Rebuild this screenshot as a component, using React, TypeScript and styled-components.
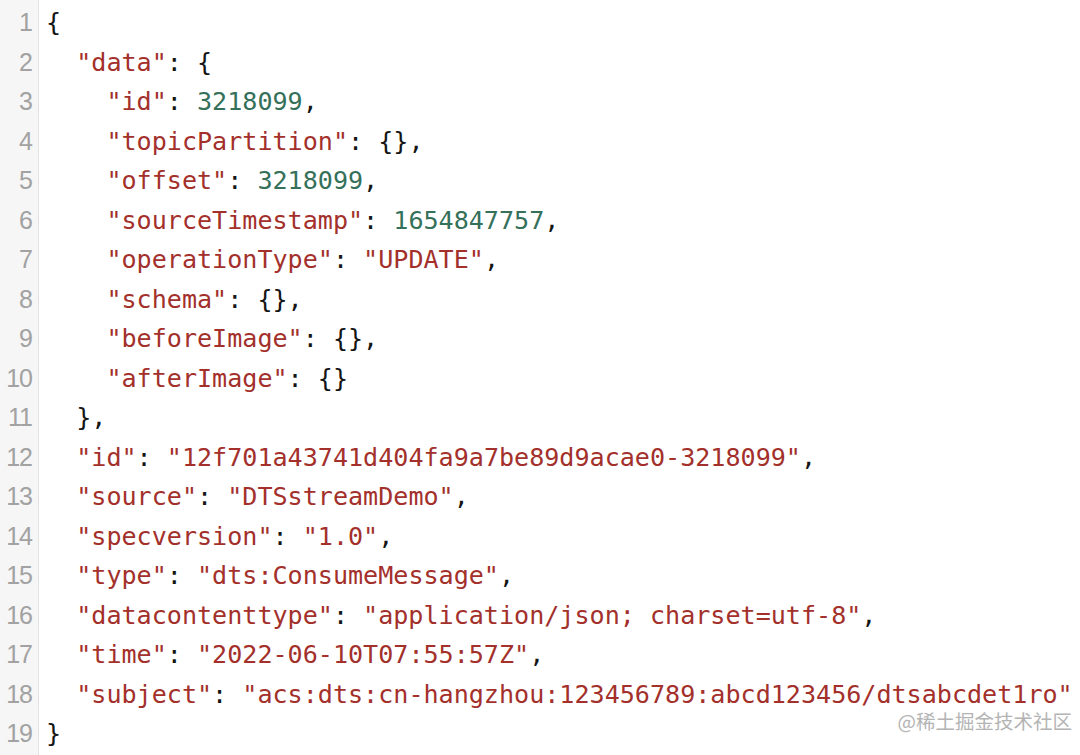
import React from "react";
import styled, { createGlobalStyle } from "styled-components";

const GlobalStyle = createGlobalStyle`
  html, body { margin: 0; padding: 0; background: #ffffff; }
  body { width: 1080px; height: 755px; overflow: hidden; }
`;

const Editor = styled.div`
  position: relative;
  display: flex;
  width: 1080px;
  height: 755px;
  background: #ffffff;
  overflow: hidden;
`;

const Gutter = styled.div`
  display: flex;
  flex-direction: column;
  align-items: flex-end;
  width: 32px;
  padding: 3px 6px 0 0;
  background: #f6f6f6;
  border-right: 1px solid #e3e3e3;
  flex-shrink: 0;
`;

const LineNo = styled.div`
  font-family: "Liberation Sans", Arial, sans-serif;
  font-size: 25px;
  line-height: 39.5px;
  height: 39.5px;
  color: #a2a2a2;
  letter-spacing: -1px;
`;

const Code = styled.div`
  display: flex;
  flex-direction: column;
  padding: 3px 0 0 7px;
  font-family: "DejaVu Sans Mono", "Liberation Mono", monospace;
  font-size: 25.08px;
  color: #151515;
`;

const Line = styled.div`
  line-height: 39.5px;
  height: 39.5px;
  white-space: pre;
`;

const Key = styled.span`
  color: #a3302b;
`;

const Num = styled.span`
  color: #35705a;
`;

const Watermark = styled.div`
  position: absolute;
  right: 8px;
  bottom: 20px;
  font-family: "Noto Sans CJK SC", "Noto Sans", sans-serif;
  font-size: 19.5px;
  color: #b4b4b4;
`;

type Tok = { t: string; k?: "s" | "n" };

const rows: Tok[][] = [
  [{ t: "{" }],
  [{ t: "  " }, { t: '"data"', k: "s" }, { t: ": {" }],
  [{ t: "    " }, { t: '"id"', k: "s" }, { t: ": " }, { t: "3218099", k: "n" }, { t: "," }],
  [{ t: "    " }, { t: '"topicPartition"', k: "s" }, { t: ": {}," }],
  [{ t: "    " }, { t: '"offset"', k: "s" }, { t: ": " }, { t: "3218099", k: "n" }, { t: "," }],
  [{ t: "    " }, { t: '"sourceTimestamp"', k: "s" }, { t: ": " }, { t: "1654847757", k: "n" }, { t: "," }],
  [{ t: "    " }, { t: '"operationType"', k: "s" }, { t: ": " }, { t: '"UPDATE"', k: "s" }, { t: "," }],
  [{ t: "    " }, { t: '"schema"', k: "s" }, { t: ": {}," }],
  [{ t: "    " }, { t: '"beforeImage"', k: "s" }, { t: ": {}," }],
  [{ t: "    " }, { t: '"afterImage"', k: "s" }, { t: ": {}" }],
  [{ t: "  }," }],
  [{ t: "  " }, { t: '"id"', k: "s" }, { t: ": " }, { t: '"12f701a43741d404fa9a7be89d9acae0-3218099"', k: "s" }, { t: "," }],
  [{ t: "  " }, { t: '"source"', k: "s" }, { t: ": " }, { t: '"DTSstreamDemo"', k: "s" }, { t: "," }],
  [{ t: "  " }, { t: '"specversion"', k: "s" }, { t: ": " }, { t: '"1.0"', k: "s" }, { t: "," }],
  [{ t: "  " }, { t: '"type"', k: "s" }, { t: ": " }, { t: '"dts:ConsumeMessage"', k: "s" }, { t: "," }],
  [{ t: "  " }, { t: '"datacontenttype"', k: "s" }, { t: ": " }, { t: '"application/json; charset=utf-8"', k: "s" }, { t: "," }],
  [{ t: "  " }, { t: '"time"', k: "s" }, { t: ": " }, { t: '"2022-06-10T07:55:57Z"', k: "s" }, { t: "," }],
  [{ t: "  " }, { t: '"subject"', k: "s" }, { t: ": " }, { t: '"acs:dts:cn-hangzhou:123456789:abcd123456/dtsabcdet1ro"', k: "s" }],
  [{ t: "}" }],
];

export default function App() {
  return (
    <>
      <GlobalStyle />
      <Editor>
        <Gutter>
          {rows.map((_, i) => (
            <LineNo key={i}>{i + 1}</LineNo>
          ))}
        </Gutter>
        <Code>
          {rows.map((toks, i) => (
            <Line key={i}>
              {toks.map((tk, j) =>
                tk.k === "s" ? (
                  <Key key={j}>{tk.t}</Key>
                ) : tk.k === "n" ? (
                  <Num key={j}>{tk.t}</Num>
                ) : (
                  <React.Fragment key={j}>{tk.t}</React.Fragment>
                )
              )}
            </Line>
          ))}
        </Code>
        <Watermark>@稀土掘金技术社区</Watermark>
      </Editor>
    </>
  );
}
